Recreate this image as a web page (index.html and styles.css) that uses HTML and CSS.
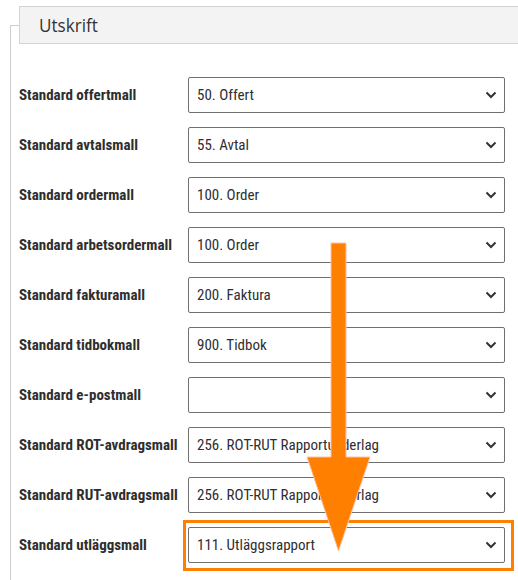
FILE: index.html
```html
<!DOCTYPE html>
<html lang="sv">
<head>
<meta charset="utf-8">
<link rel="stylesheet" href="styles.css">
</head>
<body>
<div class="page">
  <div class="fieldset">
    <div class="legend"><span class="legend-text">Utskrift</span></div>
    <div class="rows">
      <div class="row"><div class="label">Standard offertmall</div><div class="select"><span class="value">50. Offert</span><svg class="chev" viewBox="0 0 12 8"><path d="M1.5 1.5 L6 6 L10.5 1.5"/></svg></div></div>
      <div class="row"><div class="label">Standard avtalsmall</div><div class="select"><span class="value">55. Avtal</span><svg class="chev" viewBox="0 0 12 8"><path d="M1.5 1.5 L6 6 L10.5 1.5"/></svg></div></div>
      <div class="row"><div class="label">Standard ordermall</div><div class="select"><span class="value">100. Order</span><svg class="chev" viewBox="0 0 12 8"><path d="M1.5 1.5 L6 6 L10.5 1.5"/></svg></div></div>
      <div class="row"><div class="label">Standard arbetsordermall</div><div class="select"><span class="value">100. Order</span><svg class="chev" viewBox="0 0 12 8"><path d="M1.5 1.5 L6 6 L10.5 1.5"/></svg></div></div>
      <div class="row"><div class="label">Standard fakturamall</div><div class="select"><span class="value">200. Faktura</span><svg class="chev" viewBox="0 0 12 8"><path d="M1.5 1.5 L6 6 L10.5 1.5"/></svg></div></div>
      <div class="row"><div class="label">Standard tidbokmall</div><div class="select"><span class="value">900. Tidbok</span><svg class="chev" viewBox="0 0 12 8"><path d="M1.5 1.5 L6 6 L10.5 1.5"/></svg></div></div>
      <div class="row"><div class="label">Standard e-postmall</div><div class="select"><span class="value"></span><svg class="chev" viewBox="0 0 12 8"><path d="M1.5 1.5 L6 6 L10.5 1.5"/></svg></div></div>
      <div class="row"><div class="label">Standard ROT-avdragsmall</div><div class="select"><span class="value">256. ROT-RUT Rapportunderlag</span><svg class="chev" viewBox="0 0 12 8"><path d="M1.5 1.5 L6 6 L10.5 1.5"/></svg></div></div>
      <div class="row"><div class="label">Standard RUT-avdragsmall</div><div class="select"><span class="value">256. ROT-RUT Rapportunderlag</span><svg class="chev" viewBox="0 0 12 8"><path d="M1.5 1.5 L6 6 L10.5 1.5"/></svg></div></div>
      <div class="row"><div class="label">Standard utläggsmall</div><div class="select"><span class="value">111. Utläggsrapport</span><svg class="chev" viewBox="0 0 12 8"><path d="M1.5 1.5 L6 6 L10.5 1.5"/></svg></div></div>
    </div>
  </div>
  <div class="highlight"></div>
  <svg class="arrow" width="518" height="580" viewBox="0 0 518 580">
    <path d="M331 243 H346 V457 H370 L338.5 551 L307 457 H331 Z"/>
  </svg>
</div>
</body>
</html>
```

FILE: styles.css
```css
html, body {
  margin: 0;
  padding: 0;
  background: #fff;
  overflow: hidden;
}
.page {
  position: relative;
  width: 518px;
  height: 580px;
  overflow: hidden;
  font-family: Roboto, "Liberation Sans", sans-serif;
  color: #2e2e2e;
}
.fieldset {
  margin: 25px 0 0 10px;
  border-top: 1px solid #cfcfcf;
  border-left: 1px solid #cfcfcf;
  height: 600px;
}
.legend {
  margin: -20px -20px 0 8px;
  height: 36px;
  background: #f3f3f3;
  border: 1px solid #d3d3d3;
  display: flex;
  align-items: center;
  padding-left: 19px;
}
.legend-text {
  font-family: "Open Sans", sans-serif;
  font-size: 19px;
  color: #333;
  display: inline-block;
  transform: scaleX(0.9);
  transform-origin: left center;
}
.rows {
  display: flex;
  flex-direction: column;
  gap: 14px;
  padding-top: 33px;
  padding-left: 8px;
}
.row {
  display: flex;
  align-items: center;
  height: 36px;
}
.label {
  width: 169px;
  flex: none;
  font-weight: 700;
  font-size: 15px;
  color: #2e2e2e;
  white-space: nowrap;
  font-stretch: condensed;
}
.select {
  width: 317px;
  height: 36px;
  box-sizing: border-box;
  border: 1px solid #6f6f6f;
  border-radius: 2px;
  display: flex;
  align-items: center;
  justify-content: space-between;
  padding: 0 7px 0 8px;
  background: #fff;
}
.value {
  font-size: 15px;
  color: #2e2e34;
  white-space: nowrap;
  font-stretch: condensed;
}
.chev {
  width: 12px;
  height: 8px;
  fill: none;
  stroke: #333;
  stroke-width: 2;
}
.highlight {
  position: absolute;
  left: 183px;
  top: 520px;
  width: 325px;
  height: 45px;
  border: 3px solid #ff7f00;
}
.arrow {
  position: absolute;
  left: 0;
  top: 0;
}
.arrow path {
  fill: #ff8000;
  stroke: #ffc0a8;
  stroke-width: 1;
}
```
